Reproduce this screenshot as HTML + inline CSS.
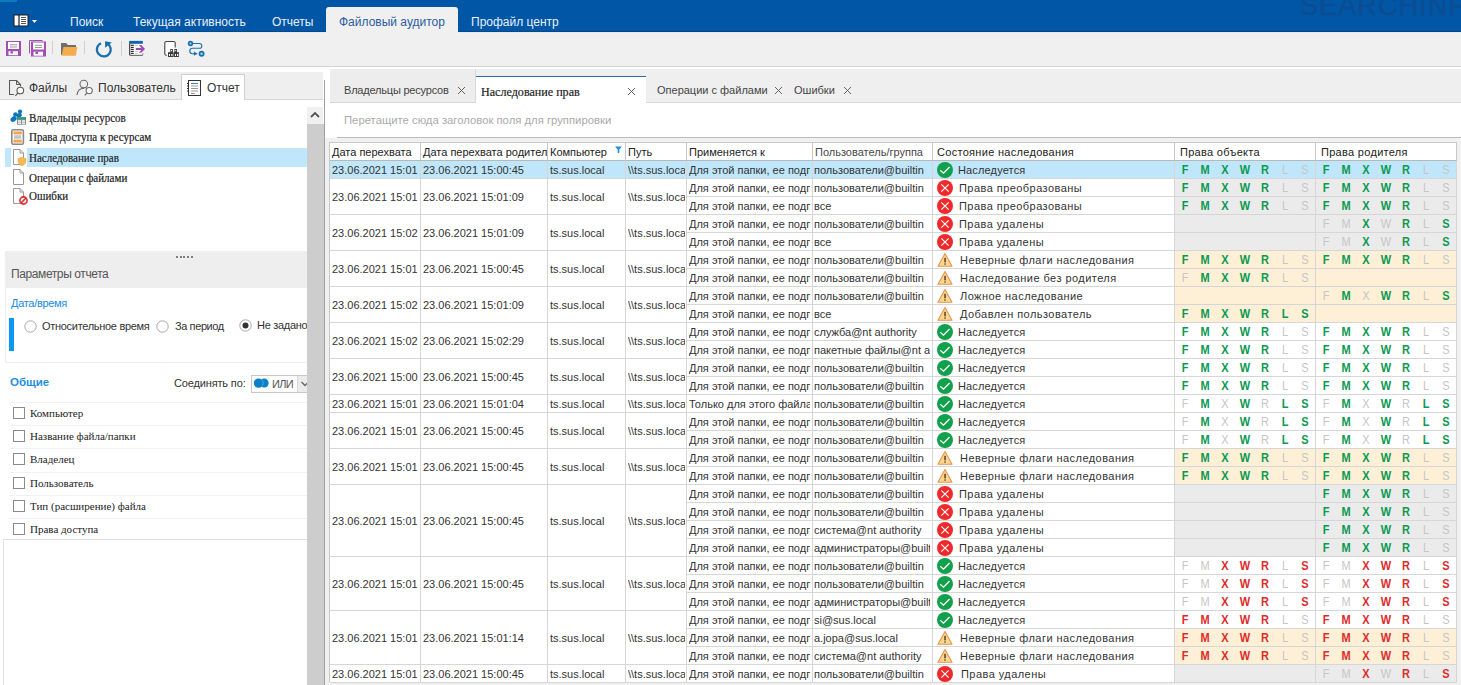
<!DOCTYPE html><html><head><meta charset="utf-8"><title>FileAuditor</title><style>
*{box-sizing:border-box}
html,body{margin:0;padding:0}
body{width:1461px;height:685px;overflow:hidden;background:#f0f0f0;font-family:"Liberation Sans",sans-serif;position:relative;color:#222}
.a{position:absolute;white-space:nowrap}
.tt{font-size:12px;color:#e8f1fb;top:15px;line-height:14px}
.srf{font-family:"Liberation Serif",serif;-webkit-text-stroke:0.2px #222}
.c{position:absolute;overflow:hidden;white-space:nowrap;border-right:1px solid #d6d6d6;border-bottom:1px solid #d6d6d6;font-size:11px;line-height:17px;padding-left:2px;padding-top:1px;color:#333}
.r{position:absolute;top:1px;width:20px;text-align:center;font-size:12.5px;line-height:17px;font-weight:bold;transform:scaleX(0.88)}
.g{color:#0a9a52}.d{color:#dd2c2c}.n{color:#c6c6c6;font-weight:normal}
.hd{position:absolute;overflow:hidden;white-space:nowrap;border-right:1px solid #c8c8c8;border-bottom:1px solid #b8b8b8;font-size:11px;line-height:17px;padding-left:3px;color:#222;background:#fff}
</style></head><body>
<div class="a" style="left:0;top:0;width:1461px;height:32px;background:#0156a6"></div>
<div class="a" style="left:0;top:0;width:17px;height:2px;background:#0a7cc0"></div>
<div class="a" style="left:0;top:31px;width:1461px;height:1px;background:#02498c"></div>
<div class="a" style="left:0;top:32px;width:1461px;height:1px;background:#e2ebf3"></div>
<div class="a" style="left:1300px;top:-9px;font-size:27px;letter-spacing:1.1px;color:#0a4d92;-webkit-text-stroke:0.5px #0a4d92;line-height:30px">SEARCHINFORM</div>
<svg class="a" style="left:13px;top:14px" width="26" height="13" viewBox="0 0 26 13"><rect x="1" y="1" width="14" height="11" fill="#fff" stroke="#1a1a1a" stroke-width="1"/><line x1="6" y1="1" x2="6" y2="12" stroke="#1a1a1a" stroke-width="1.2"/><line x1="8" y1="3.5" x2="13" y2="3.5" stroke="#555" stroke-width="1"/><line x1="8" y1="5.5" x2="13" y2="5.5" stroke="#555" stroke-width="1"/><line x1="8" y1="7.5" x2="13" y2="7.5" stroke="#555" stroke-width="1"/><line x1="8" y1="9.5" x2="13" y2="9.5" stroke="#555" stroke-width="1"/><path d="M19 6 L24 6 L21.5 9 Z" fill="#fff"/></svg>
<div class="a tt" style="left:70px">Поиск</div>
<div class="a tt" style="left:133px">Текущая активность</div>
<div class="a tt" style="left:272px">Отчеты</div>
<div class="a" style="left:326px;top:7px;width:132px;height:26px;background:#f0f0f0;border-radius:3px 3px 0 0"></div>
<div class="a tt" style="left:339px;color:#2b5d9e">Файловый аудитор</div>
<div class="a tt" style="left:471px">Профайл центр</div>
<svg class="a" style="left:6px;top:41px" width="18" height="18" viewBox="0 0 18 18"><rect x="0" y="0" width="15" height="15" fill="#a24fb3"/><rect x="2" y="1" width="11" height="7" fill="#fff"/><rect x="4" y="3.3" width="7" height="1" fill="#999"/><rect x="4" y="5.5" width="7" height="1" fill="#999"/><rect x="2.5" y="10.2" width="9.5" height="4" fill="#fff"/><rect x="4.5" y="10.2" width="2.5" height="2.3" fill="#a24fb3"/></svg>
<svg class="a" style="left:29px;top:40px" width="18" height="18" viewBox="0 0 18 18"><path d="M0.5 13.5 V0.5 H13.5" fill="none" stroke="#a24fb3" stroke-width="1"/><rect x="2" y="1.5" width="15" height="15" fill="#a24fb3"/><rect x="4" y="2.5" width="11" height="7" fill="#fff"/><rect x="6" y="4.8" width="7" height="1" fill="#999"/><rect x="6" y="7" width="7" height="1" fill="#999"/><rect x="4.5" y="11.7" width="9.5" height="4" fill="#fff"/><rect x="6.5" y="11.7" width="2.5" height="2.3" fill="#a24fb3"/></svg>
<div class="a" style="left:52px;top:41px;width:1px;height:13px;background:#d0d0d0"></div>
<svg class="a" style="left:61px;top:42px" width="17" height="14" viewBox="0 0 17 14"><path d="M0 1 H5 L7 3 H15 V13 H0 Z" fill="#6e6e6e"/><path d="M2.5 5 H16.5 L14.5 13.8 H0.5 Z" fill="#f4ad4d"/></svg>
<div class="a" style="left:84px;top:41px;width:1px;height:13px;background:#d0d0d0"></div>
<svg class="a" style="left:94px;top:40px" width="19" height="19" viewBox="0 0 19 19"><path d="M7 3.2 A6.9 6.9 0 1 0 11.4 2.8" fill="none" stroke="#1b6fae" stroke-width="2.2"/><path d="M11.1 1.2 L17.8 2.4 L11.1 7.7 Z" fill="#1b6fae"/></svg>
<div class="a" style="left:121px;top:41px;width:1px;height:15px;background:#d0d0d0"></div>
<svg class="a" style="left:129px;top:40px" width="17" height="17" viewBox="0 0 17 17"><path d="M0.7 3.5 V14.3 Q0.7 15.2 1.6 15.2 H12.8 Q13.6 15.2 13.6 14.3 V13" fill="#fff" stroke="#454545" stroke-width="1.2"/><rect x="0.7" y="3.5" width="12.9" height="11.2" fill="#fff"/><rect x="0.1" y="0.9" width="13.7" height="2.9" fill="#0b68a8"/><rect x="0.1" y="3.5" width="1.2" height="11.5" fill="#454545"/><rect x="1.9" y="4.7" width="2.9" height="1.2" fill="#333"/><rect x="1.9" y="6.8" width="2.9" height="1.2" fill="#333"/><rect x="1.9" y="8.8" width="2.9" height="1.2" fill="#333"/><rect x="1.9" y="10.8" width="2.9" height="1.2" fill="#333"/><rect x="1.9" y="12.8" width="2.9" height="1.2" fill="#333"/><rect x="5.9" y="4.8" width="3" height="0.9" fill="#bbb"/><rect x="5.9" y="10.9" width="3" height="0.9" fill="#bbb"/><rect x="5.9" y="12.9" width="3" height="0.9" fill="#bbb"/><rect x="6.8" y="7.9" width="6.5" height="2.1" fill="#9b4bb0"/><path d="M9.8 5 H12.3 L16 8.95 L12.3 12.8 H9.8 L13.4 8.95 Z" fill="#9b4bb0"/></svg>
<svg class="a" style="left:164px;top:40px" width="16" height="18" viewBox="0 0 16 18"><path d="M2.8 15.2 H2.3 A1.5 1.5 0 0 1 0.8 13.7 V3 A1.5 1.5 0 0 1 2.3 1.5 H9.7 A1.5 1.5 0 0 1 11.2 3 V7.6" fill="#fff" stroke="#444" stroke-width="1.1"/><rect x="6.3" y="9" width="2.5" height="4" fill="#3a3a3a"/><rect x="10.4" y="9" width="2.6" height="4" fill="#3a3a3a"/><rect x="4" y="12.2" width="5.6" height="4.8" fill="#3a3a3a"/><rect x="9.9" y="12.2" width="5" height="4.8" fill="#3a3a3a"/><rect x="7" y="10" width="1" height="1.2" fill="#fff"/><rect x="11.2" y="10" width="1" height="1.2" fill="#fff"/><rect x="5" y="14" width="1" height="2" fill="#fff"/><rect x="7.3" y="14" width="1.2" height="2" fill="#fff"/><rect x="11" y="14" width="1" height="2" fill="#fff"/><rect x="13" y="14" width="1.2" height="2" fill="#fff"/></svg>
<svg class="a" style="left:187px;top:40px" width="19" height="18" viewBox="0 0 19 18"><path d="M5.5 3.5 H12.4 A2.4 2.4 0 0 1 12.4 8.3 H5.5 A2.7 2.7 0 0 0 5.5 13.7 H7" fill="none" stroke="#1b6fae" stroke-width="1.1"/><circle cx="3.5" cy="3.5" r="1.9" fill="#8fd6f5" stroke="#1b6fae" stroke-width="1.6"/><path d="M6.9 11.6 L10.6 13.7 L6.9 15.8 Z" fill="#1b6fae"/><circle cx="14.6" cy="13.7" r="2.1" fill="#8fd6f5" stroke="#1b6fae" stroke-width="1.7"/></svg>
<div class="a" style="left:0;top:66px;width:1461px;height:1px;background:#d2d2d2"></div>
<div class="a" style="left:0;top:67px;width:1461px;height:618px;background:#fff"></div>
<div class="a" style="left:0;top:72px;width:323px;height:28px;background:#efefef;border-bottom:1px solid #d6d6d6"></div>
<svg class="a" style="left:9px;top:80px" width="16" height="17" viewBox="0 0 16 17"><path d="M5 14.5 H0.5 V0.5 H7.5 L11.5 4.5 V6.5" fill="none" stroke="#5a5a5a" stroke-width="1.1"/><path d="M7.5 0.5 V4.5 H11.5" fill="none" stroke="#5a5a5a" stroke-width="1"/><circle cx="11.3" cy="10.6" r="3.3" fill="#fff" stroke="#5a5a5a" stroke-width="1.1"/><line x1="9" y1="13" x2="6.3" y2="15.8" stroke="#5a5a5a" stroke-width="1.1"/></svg>
<div class="a" style="left:29px;top:81px;font-size:12px;line-height:15px;color:#333">Файлы</div>
<svg class="a" style="left:76px;top:79px" width="18" height="17" viewBox="0 0 18 17"><circle cx="7.8" cy="5.1" r="3.8" fill="none" stroke="#6a6a6a" stroke-width="1.1"/><path d="M1 16 C1.5 11.5 4 9.3 8 9.3" fill="none" stroke="#6a6a6a" stroke-width="1.1"/><circle cx="13.2" cy="11.6" r="3.1" fill="#fff" stroke="#6a6a6a" stroke-width="1.1"/><line x1="11" y1="13.8" x2="8.8" y2="16.4" stroke="#6a6a6a" stroke-width="1.1"/></svg>
<div class="a" style="left:98px;top:81px;font-size:12px;line-height:15px;color:#333">Пользователь</div>
<div class="a" style="left:181px;top:74px;width:64px;height:26px;background:#fff;border:1px solid #cfcfcf;border-bottom:none"></div>
<svg class="a" style="left:187px;top:80px" width="15" height="16" viewBox="0 0 15 16"><rect x="1.5" y="0.5" width="12" height="15" fill="#fff" stroke="#333" stroke-width="1"/><rect x="4" y="3" width="7" height="1" fill="#1a8fd0"/><rect x="4" y="5.5" width="7" height="1" fill="#999"/><rect x="4" y="8" width="7" height="1" fill="#999"/><rect x="4" y="10.5" width="7" height="1" fill="#999"/><rect x="4" y="13" width="4" height="1" fill="#999"/><rect x="0" y="3" width="2" height="1" fill="#333"/><rect x="0" y="5.5" width="2" height="1" fill="#333"/><rect x="0" y="8" width="2" height="1" fill="#333"/><rect x="0" y="10.5" width="2" height="1" fill="#333"/></svg>
<div class="a" style="left:207px;top:81px;font-size:12px;line-height:15px;color:#333">Отчет</div>
<div class="a" style="left:307px;top:107px;width:16px;height:17px;background:#f0f0f0"></div>
<svg class="a" style="left:310px;top:111px" width="10" height="8" viewBox="0 0 10 8"><path d="M1 6 L5 2 L9 6" fill="none" stroke="#555" stroke-width="1.8"/></svg>
<div class="a" style="left:307px;top:124px;width:17px;height:561px;background:#cdcdcd;z-index:5"></div>
<div class="a" style="left:324px;top:80px;width:1px;height:605px;background:#a0a0a0;z-index:6"></div>
<div class="a" style="left:5px;top:148px;width:302px;height:19px;background:#bfe6fa"></div>
<div class="a" style="left:11px;top:148px;width:16px;height:19px;background:#fff"></div>
<div class="a srf" style="left:29px;top:112px;font-size:12px;line-height:13px;color:#222;transform:scaleX(0.917);transform-origin:0 0">Владельцы ресурсов</div>
<div class="a srf" style="left:29px;top:131px;font-size:12px;line-height:13px;color:#222;transform:scaleX(0.917);transform-origin:0 0">Права доступа к ресурсам</div>
<div class="a srf" style="left:29px;top:152px;font-size:12px;line-height:13px;color:#222;transform:scaleX(0.917);transform-origin:0 0">Наследование прав</div>
<div class="a srf" style="left:29px;top:172px;font-size:12px;line-height:13px;color:#222;transform:scaleX(0.917);transform-origin:0 0">Операции с файлами</div>
<div class="a srf" style="left:29px;top:190px;font-size:12px;line-height:13px;color:#222;transform:scaleX(0.917);transform-origin:0 0">Ошибки</div>
<svg class="a" style="left:10px;top:109px" width="17" height="16" viewBox="0 0 17 16"><circle cx="10" cy="2.6" r="2.1" fill="#0f73bd"/><ellipse cx="9.2" cy="6.3" rx="2.8" ry="2.3" transform="rotate(-35 9.2 6.3)" fill="#0f73bd"/><circle cx="5.4" cy="5.4" r="2.2" fill="#0f73bd"/><ellipse cx="3.6" cy="10" rx="3.3" ry="2.5" transform="rotate(-35 3.6 10)" fill="#0f73bd"/><rect x="7" y="8.2" width="9" height="7.5" fill="#8e8e8e"/><rect x="7" y="8.2" width="9" height="2.2" fill="#2a9d86"/><rect x="8" y="11.2" width="3" height="1.6" fill="#f4f4f4"/><rect x="12" y="11.2" width="3" height="1.6" fill="#f4f4f4"/><rect x="8" y="13.4" width="3" height="1.5" fill="#f4f4f4"/><rect x="12" y="13.4" width="3" height="1.5" fill="#f4f4f4"/></svg>
<svg class="a" style="left:11px;top:129px" width="14" height="16" viewBox="0 0 14 16"><rect x="0.8" y="0.8" width="11.6" height="14.4" rx="1.5" fill="#fff" stroke="#8a8a8a" stroke-width="1.6"/><rect x="2.4" y="2.4" width="8.4" height="3" fill="#f5a64c"/><rect x="2.4" y="10.6" width="8.4" height="3" fill="#f5a64c"/><rect x="3" y="6.6" width="7.2" height="0.9" fill="#7d8fa3"/><rect x="3" y="8.5" width="7.2" height="0.9" fill="#7d8fa3"/></svg>
<svg class="a" style="left:12px;top:149px" width="16" height="17" viewBox="0 0 16 17"><path d="M1.5 0.5 H8 L11.5 4 V15.5 H1.5 Z" fill="#fff" stroke="#999" stroke-width="1"/><path d="M8 0.5 V4 H11.5" fill="none" stroke="#999" stroke-width="1"/><path d="M6 9.6 L10 8.2 L14 9.6 V12.3 C14 14.6 12.2 16 10 16.9 C7.8 16 6 14.6 6 12.3 Z" fill="#f5b955" stroke="#e9a23a" stroke-width="0.5"/></svg>
<svg class="a" style="left:12px;top:169px" width="16" height="17" viewBox="0 0 16 17"><path d="M1.5 0.5 H8 L11.5 4 V15.5 H1.5 Z" fill="#fff" stroke="#999" stroke-width="1"/><path d="M8 0.5 V4 H11.5" fill="none" stroke="#999" stroke-width="1"/></svg>
<svg class="a" style="left:12px;top:188px" width="16" height="17" viewBox="0 0 16 17"><path d="M1.5 0.5 H8 L11.5 4 V15.5 H1.5 Z" fill="#fff" stroke="#999" stroke-width="1"/><path d="M8 0.5 V4 H11.5" fill="none" stroke="#999" stroke-width="1"/><circle cx="11.5" cy="12.5" r="3.6" fill="#fff" stroke="#e02a2a" stroke-width="1.6"/><line x1="9" y1="15" x2="14" y2="10" stroke="#e02a2a" stroke-width="1.6"/></svg>
<div class="a" style="left:5px;top:251px;width:302px;height:36px;background:#eeeeee"></div>
<div class="a" style="left:175.7px;top:256px;width:2px;height:2px;background:#5a5a5a;border-radius:1px"></div>
<div class="a" style="left:179.5px;top:256px;width:2px;height:2px;background:#5a5a5a;border-radius:1px"></div>
<div class="a" style="left:183.3px;top:256px;width:2px;height:2px;background:#5a5a5a;border-radius:1px"></div>
<div class="a" style="left:187.1px;top:256px;width:2px;height:2px;background:#5a5a5a;border-radius:1px"></div>
<div class="a" style="left:190.9px;top:256px;width:2px;height:2px;background:#5a5a5a;border-radius:1px"></div>
<div class="a" style="left:11px;top:267px;font-size:12px;line-height:14px;color:#555;letter-spacing:-0.4px">Параметры отчета</div>
<div class="a" style="left:5px;top:287px;width:302px;height:76px;border:1px solid #ededed;border-right:none"></div>
<div class="a" style="left:11px;top:297px;font-size:11px;line-height:13px;color:#1689e8;letter-spacing:-0.3px">Дата/время</div>
<div class="a" style="left:9px;top:318px;width:5px;height:33px;background:#0c97f2"></div>
<svg class="a" style="left:24px;top:320px" width="13" height="13" viewBox="0 0 13 13"><circle cx="6.5" cy="6.5" r="5.7" fill="#fff" stroke="#a8a8a8" stroke-width="1"/></svg>
<svg class="a" style="left:156px;top:320px" width="13" height="13" viewBox="0 0 13 13"><circle cx="6.5" cy="6.5" r="5.7" fill="#fff" stroke="#a8a8a8" stroke-width="1"/></svg>
<svg class="a" style="left:239px;top:319px" width="13" height="13" viewBox="0 0 13 13"><circle cx="6.5" cy="6.5" r="5.7" fill="#fff" stroke="#a8a8a8" stroke-width="1"/><circle cx="6.5" cy="6.5" r="3" fill="#333"/></svg>
<div class="a" style="left:42px;top:320px;font-size:11px;line-height:13px;color:#333;letter-spacing:-0.3px">Относительное время</div>
<div class="a" style="left:175px;top:320px;font-size:11px;line-height:13px;color:#333;letter-spacing:-0.4px">За период</div>
<div class="a" style="left:257px;top:319px;width:50px;overflow:hidden;font-size:11px;line-height:13px;color:#333;letter-spacing:-0.3px">Не задано</div>
<div class="a" style="left:10px;top:376px;font-size:11.5px;line-height:13px;color:#1f8fe0;font-weight:bold">Общие</div>
<div class="a" style="left:174px;top:377px;font-size:11px;line-height:13px;color:#333;letter-spacing:-0.15px">Соединять по:</div>
<div class="a" style="left:251px;top:375px;width:60px;height:18px;background:#fff;border:1px solid #c8c8c8"></div>
<div class="a" style="left:297px;top:376px;width:14px;height:16px;background:#ebebeb;border-left:1px solid #d8d8d8"></div>
<svg class="a" style="left:253px;top:378px" width="16" height="11" viewBox="0 0 16 11"><circle cx="5.5" cy="5.1" r="4.7" fill="#0a80c8"/><circle cx="11.2" cy="5.1" r="4.5" fill="#0a80c8"/><path d="M8.4 1.4 A4.7 4.7 0 0 1 8.4 8.8" fill="none" stroke="#58c0ee" stroke-width="0.7"/></svg>
<div class="a" style="left:272px;top:378px;font-size:11px;line-height:13px;color:#555;letter-spacing:-0.7px">ИЛИ</div>
<svg class="a" style="left:301px;top:381px" width="8" height="6" viewBox="0 0 8 6"><path d="M0.5 1 L4 4.5 L7.5 1" fill="none" stroke="#666" stroke-width="1.3"/></svg>
<div class="a" style="left:9px;top:402px;width:298px;height:1px;background:#f2f2f2"></div>
<div class="a" style="left:13px;top:407.0px;width:12px;height:12px;border:1px solid #8a8a8a;background:#fff"></div>
<div class="a" style="font-family:'Liberation Serif',serif;left:30px;top:407.0px;font-size:11px;line-height:13px;color:#222">Компьютер</div>
<div class="a" style="left:9px;top:425px;width:298px;height:1px;background:#f2f2f2"></div>
<div class="a" style="left:13px;top:430.0px;width:12px;height:12px;border:1px solid #8a8a8a;background:#fff"></div>
<div class="a" style="font-family:'Liberation Serif',serif;left:30px;top:430.0px;font-size:11px;line-height:13px;color:#222">Название файла/папки</div>
<div class="a" style="left:9px;top:448px;width:298px;height:1px;background:#f2f2f2"></div>
<div class="a" style="left:13px;top:453.0px;width:12px;height:12px;border:1px solid #8a8a8a;background:#fff"></div>
<div class="a" style="font-family:'Liberation Serif',serif;left:30px;top:453.0px;font-size:11px;line-height:13px;color:#222">Владелец</div>
<div class="a" style="left:9px;top:472px;width:298px;height:1px;background:#f2f2f2"></div>
<div class="a" style="left:13px;top:477.0px;width:12px;height:12px;border:1px solid #8a8a8a;background:#fff"></div>
<div class="a" style="font-family:'Liberation Serif',serif;left:30px;top:477.0px;font-size:11px;line-height:13px;color:#222">Пользователь</div>
<div class="a" style="left:9px;top:495px;width:298px;height:1px;background:#f2f2f2"></div>
<div class="a" style="left:13px;top:500.0px;width:12px;height:12px;border:1px solid #8a8a8a;background:#fff"></div>
<div class="a" style="font-family:'Liberation Serif',serif;left:30px;top:500.0px;font-size:11px;line-height:13px;color:#222">Тип (расширение) файла</div>
<div class="a" style="left:9px;top:518px;width:298px;height:1px;background:#f2f2f2"></div>
<div class="a" style="left:13px;top:523.0px;width:12px;height:12px;border:1px solid #8a8a8a;background:#fff"></div>
<div class="a" style="font-family:'Liberation Serif',serif;left:30px;top:523.0px;font-size:11px;line-height:13px;color:#222">Права доступа</div>
<div class="a" style="left:3px;top:539px;width:304px;height:146px;border:1px solid #e0e0e0;border-right:none;border-bottom:none"></div>
<div class="a" style="left:330px;top:69px;width:1131px;height:34px;background:#efefef;border-bottom:1px solid #d9d9d9"></div>
<div class="a" style="left:330px;top:69px;width:146px;height:34px;background:#ededed;border-right:1px solid #d9d9d9;border-bottom:1px solid #d6d6d6"></div>
<div class="a" style="left:344px;top:84px;font-size:11px;line-height:13px;color:#444;letter-spacing:-0.2px">Владельцы ресурсов</div>
<svg class="a" style="left:457px;top:86px" width="9" height="9" viewBox="0 0 9 9"><path d="M1 1 L8 8 M8 1 L1 8" stroke="#555" stroke-width="0.9"/></svg>
<div class="a" style="left:476px;top:76px;width:170px;height:28px;background:#fff;border-top:1px solid #2a6cb2"></div>
<div class="a srf" style="left:481px;top:85px;font-size:13px;line-height:14px;color:#222;transform:scaleX(0.93);transform-origin:0 0">Наследование прав</div>
<svg class="a" style="left:627px;top:87px" width="9" height="9" viewBox="0 0 9 9"><path d="M1 1 L8 8 M8 1 L1 8" stroke="#555" stroke-width="0.9"/></svg>
<div class="a" style="left:657px;top:84px;font-size:11px;line-height:13px;color:#444">Операции с файлами</div>
<svg class="a" style="left:774px;top:86px" width="9" height="9" viewBox="0 0 9 9"><path d="M1 1 L8 8 M8 1 L1 8" stroke="#555" stroke-width="0.9"/></svg>
<div class="a" style="left:794px;top:84px;font-size:11px;line-height:13px;color:#444">Ошибки</div>
<svg class="a" style="left:843px;top:86px" width="9" height="9" viewBox="0 0 9 9"><path d="M1 1 L8 8 M8 1 L1 8" stroke="#555" stroke-width="0.9"/></svg>
<div class="a" style="left:344px;top:114px;font-size:11.3px;line-height:13px;color:#aaa">Перетащите сюда заголовок поля для группировки</div>
<div class="a" style="left:337px;top:137px;width:1124px;height:1px;background:#bcbcbc"></div>
<div class="a" style="left:325px;top:138px;width:1136px;height:547px;background:#f0f0f0"></div>
<div class="a" style="left:329px;top:142px;width:1px;height:540px;background:#c8c8c8"></div>
<div class="a" style="left:329px;top:142px;width:1128px;height:1px;background:#c8c8c8"></div>
<div class="hd" style="left:330px;top:143px;width:91px;height:18px;color:#222;padding-left:2px;padding-top:1px;letter-spacing:normal">Дата перехвата</div>
<div class="hd" style="left:421px;top:143px;width:127px;height:18px;color:#222;padding-left:2px;padding-top:1px;letter-spacing:normal">Дата перехвата родител</div>
<div class="hd" style="left:548px;top:143px;width:78px;height:18px;color:#222;padding-left:2px;padding-top:1px;letter-spacing:normal">Компьютер</div>
<div class="hd" style="left:626px;top:143px;width:61px;height:18px;color:#222;padding-left:2px;padding-top:1px;letter-spacing:normal">Путь</div>
<div class="hd" style="left:687px;top:143px;width:126px;height:18px;color:#222;padding-left:2px;padding-top:1px;letter-spacing:normal">Применяется к</div>
<div class="hd" style="left:813px;top:143px;width:120px;height:18px;color:#484848;padding-left:2px;padding-top:1px;letter-spacing:normal">Пользователь/группа</div>
<div class="hd" style="left:933px;top:143px;width:242px;height:18px;color:#222;padding-left:4px;padding-top:1px;letter-spacing:0.3px">Состояние наследования</div>
<div class="hd" style="left:1175px;top:143px;width:141px;height:18px;color:#222;padding-left:5px;padding-top:1px;letter-spacing:0.3px">Права объекта</div>
<div class="hd" style="left:1316px;top:143px;width:141px;height:18px;color:#222;padding-left:5px;padding-top:1px;letter-spacing:0.3px">Права родителя</div>
<svg class="a" style="left:615px;top:146px" width="8" height="8" viewBox="0 0 8 8"><path d="M0 0.5 H7 L4.3 3.5 V7 H2.7 V3.5 Z" fill="#1f8fe0"/></svg>
<div class="c" style="left:330px;top:161px;width:91px;height:18px;background:#bfe6fa;padding-top:1px"><div style="overflow:hidden;width:87px">23.06.2021 15:01</div></div>
<div class="c" style="left:421px;top:161px;width:127px;height:18px;background:#bfe6fa;padding-top:1px"><div style="overflow:hidden;width:123px">23.06.2021 15:00:45</div></div>
<div class="c" style="left:548px;top:161px;width:78px;height:18px;background:#bfe6fa;padding-top:1px"><div style="overflow:hidden;width:74px">ts.sus.local</div></div>
<div class="c" style="left:626px;top:161px;width:61px;height:18px;background:#bfe6fa;padding-top:1px"><div style="overflow:hidden;width:57px">\\ts.sus.local\share</div></div>
<div class="c" style="left:330px;top:179px;width:91px;height:36px;background:#fff;padding-top:10px"><div style="overflow:hidden;width:87px">23.06.2021 15:01</div></div>
<div class="c" style="left:421px;top:179px;width:127px;height:36px;background:#fff;padding-top:10px"><div style="overflow:hidden;width:123px">23.06.2021 15:01:09</div></div>
<div class="c" style="left:548px;top:179px;width:78px;height:36px;background:#fff;padding-top:10px"><div style="overflow:hidden;width:74px">ts.sus.local</div></div>
<div class="c" style="left:626px;top:179px;width:61px;height:36px;background:#fff;padding-top:10px"><div style="overflow:hidden;width:57px">\\ts.sus.local\share</div></div>
<div class="c" style="left:330px;top:215px;width:91px;height:36px;background:#fff;padding-top:10px"><div style="overflow:hidden;width:87px">23.06.2021 15:02</div></div>
<div class="c" style="left:421px;top:215px;width:127px;height:36px;background:#fff;padding-top:10px"><div style="overflow:hidden;width:123px">23.06.2021 15:01:09</div></div>
<div class="c" style="left:548px;top:215px;width:78px;height:36px;background:#fff;padding-top:10px"><div style="overflow:hidden;width:74px">ts.sus.local</div></div>
<div class="c" style="left:626px;top:215px;width:61px;height:36px;background:#fff;padding-top:10px"><div style="overflow:hidden;width:57px">\\ts.sus.local\share</div></div>
<div class="c" style="left:330px;top:251px;width:91px;height:36px;background:#fff;padding-top:10px"><div style="overflow:hidden;width:87px">23.06.2021 15:01</div></div>
<div class="c" style="left:421px;top:251px;width:127px;height:36px;background:#fff;padding-top:10px"><div style="overflow:hidden;width:123px">23.06.2021 15:00:45</div></div>
<div class="c" style="left:548px;top:251px;width:78px;height:36px;background:#fff;padding-top:10px"><div style="overflow:hidden;width:74px">ts.sus.local</div></div>
<div class="c" style="left:626px;top:251px;width:61px;height:36px;background:#fff;padding-top:10px"><div style="overflow:hidden;width:57px">\\ts.sus.local\share</div></div>
<div class="c" style="left:330px;top:287px;width:91px;height:36px;background:#fff;padding-top:10px"><div style="overflow:hidden;width:87px">23.06.2021 15:02</div></div>
<div class="c" style="left:421px;top:287px;width:127px;height:36px;background:#fff;padding-top:10px"><div style="overflow:hidden;width:123px">23.06.2021 15:01:09</div></div>
<div class="c" style="left:548px;top:287px;width:78px;height:36px;background:#fff;padding-top:10px"><div style="overflow:hidden;width:74px">ts.sus.local</div></div>
<div class="c" style="left:626px;top:287px;width:61px;height:36px;background:#fff;padding-top:10px"><div style="overflow:hidden;width:57px">\\ts.sus.local\share</div></div>
<div class="c" style="left:330px;top:323px;width:91px;height:36px;background:#fff;padding-top:10px"><div style="overflow:hidden;width:87px">23.06.2021 15:02</div></div>
<div class="c" style="left:421px;top:323px;width:127px;height:36px;background:#fff;padding-top:10px"><div style="overflow:hidden;width:123px">23.06.2021 15:02:29</div></div>
<div class="c" style="left:548px;top:323px;width:78px;height:36px;background:#fff;padding-top:10px"><div style="overflow:hidden;width:74px">ts.sus.local</div></div>
<div class="c" style="left:626px;top:323px;width:61px;height:36px;background:#fff;padding-top:10px"><div style="overflow:hidden;width:57px">\\ts.sus.local\share</div></div>
<div class="c" style="left:330px;top:359px;width:91px;height:36px;background:#fff;padding-top:10px"><div style="overflow:hidden;width:87px">23.06.2021 15:00</div></div>
<div class="c" style="left:421px;top:359px;width:127px;height:36px;background:#fff;padding-top:10px"><div style="overflow:hidden;width:123px">23.06.2021 15:00:45</div></div>
<div class="c" style="left:548px;top:359px;width:78px;height:36px;background:#fff;padding-top:10px"><div style="overflow:hidden;width:74px">ts.sus.local</div></div>
<div class="c" style="left:626px;top:359px;width:61px;height:36px;background:#fff;padding-top:10px"><div style="overflow:hidden;width:57px">\\ts.sus.local\share</div></div>
<div class="c" style="left:330px;top:395px;width:91px;height:18px;background:#fff;padding-top:1px"><div style="overflow:hidden;width:87px">23.06.2021 15:01</div></div>
<div class="c" style="left:421px;top:395px;width:127px;height:18px;background:#fff;padding-top:1px"><div style="overflow:hidden;width:123px">23.06.2021 15:01:04</div></div>
<div class="c" style="left:548px;top:395px;width:78px;height:18px;background:#fff;padding-top:1px"><div style="overflow:hidden;width:74px">ts.sus.local</div></div>
<div class="c" style="left:626px;top:395px;width:61px;height:18px;background:#fff;padding-top:1px"><div style="overflow:hidden;width:57px">\\ts.sus.local\share</div></div>
<div class="c" style="left:330px;top:413px;width:91px;height:36px;background:#fff;padding-top:10px"><div style="overflow:hidden;width:87px">23.06.2021 15:01</div></div>
<div class="c" style="left:421px;top:413px;width:127px;height:36px;background:#fff;padding-top:10px"><div style="overflow:hidden;width:123px">23.06.2021 15:00:45</div></div>
<div class="c" style="left:548px;top:413px;width:78px;height:36px;background:#fff;padding-top:10px"><div style="overflow:hidden;width:74px">ts.sus.local</div></div>
<div class="c" style="left:626px;top:413px;width:61px;height:36px;background:#fff;padding-top:10px"><div style="overflow:hidden;width:57px">\\ts.sus.local\share</div></div>
<div class="c" style="left:330px;top:449px;width:91px;height:36px;background:#fff;padding-top:10px"><div style="overflow:hidden;width:87px">23.06.2021 15:01</div></div>
<div class="c" style="left:421px;top:449px;width:127px;height:36px;background:#fff;padding-top:10px"><div style="overflow:hidden;width:123px">23.06.2021 15:00:45</div></div>
<div class="c" style="left:548px;top:449px;width:78px;height:36px;background:#fff;padding-top:10px"><div style="overflow:hidden;width:74px">ts.sus.local</div></div>
<div class="c" style="left:626px;top:449px;width:61px;height:36px;background:#fff;padding-top:10px"><div style="overflow:hidden;width:57px">\\ts.sus.local\share</div></div>
<div class="c" style="left:330px;top:485px;width:91px;height:72px;background:#fff;padding-top:28px"><div style="overflow:hidden;width:87px">23.06.2021 15:01</div></div>
<div class="c" style="left:421px;top:485px;width:127px;height:72px;background:#fff;padding-top:28px"><div style="overflow:hidden;width:123px">23.06.2021 15:00:45</div></div>
<div class="c" style="left:548px;top:485px;width:78px;height:72px;background:#fff;padding-top:28px"><div style="overflow:hidden;width:74px">ts.sus.local</div></div>
<div class="c" style="left:626px;top:485px;width:61px;height:72px;background:#fff;padding-top:28px"><div style="overflow:hidden;width:57px">\\ts.sus.local\share</div></div>
<div class="c" style="left:330px;top:557px;width:91px;height:54px;background:#fff;padding-top:19px"><div style="overflow:hidden;width:87px">23.06.2021 15:01</div></div>
<div class="c" style="left:421px;top:557px;width:127px;height:54px;background:#fff;padding-top:19px"><div style="overflow:hidden;width:123px">23.06.2021 15:00:45</div></div>
<div class="c" style="left:548px;top:557px;width:78px;height:54px;background:#fff;padding-top:19px"><div style="overflow:hidden;width:74px">ts.sus.local</div></div>
<div class="c" style="left:626px;top:557px;width:61px;height:54px;background:#fff;padding-top:19px"><div style="overflow:hidden;width:57px">\\ts.sus.local\share</div></div>
<div class="c" style="left:330px;top:611px;width:91px;height:54px;background:#fff;padding-top:19px"><div style="overflow:hidden;width:87px">23.06.2021 15:01</div></div>
<div class="c" style="left:421px;top:611px;width:127px;height:54px;background:#fff;padding-top:19px"><div style="overflow:hidden;width:123px">23.06.2021 15:01:14</div></div>
<div class="c" style="left:548px;top:611px;width:78px;height:54px;background:#fff;padding-top:19px"><div style="overflow:hidden;width:74px">ts.sus.local</div></div>
<div class="c" style="left:626px;top:611px;width:61px;height:54px;background:#fff;padding-top:19px"><div style="overflow:hidden;width:57px">\\ts.sus.local\share</div></div>
<div class="c" style="left:330px;top:665px;width:91px;height:18px;background:#fff;padding-top:1px"><div style="overflow:hidden;width:87px">23.06.2021 15:01</div></div>
<div class="c" style="left:421px;top:665px;width:127px;height:18px;background:#fff;padding-top:1px"><div style="overflow:hidden;width:123px">23.06.2021 15:00:45</div></div>
<div class="c" style="left:548px;top:665px;width:78px;height:18px;background:#fff;padding-top:1px"><div style="overflow:hidden;width:74px">ts.sus.local</div></div>
<div class="c" style="left:626px;top:665px;width:61px;height:18px;background:#fff;padding-top:1px"><div style="overflow:hidden;width:57px">\\ts.sus.local\share</div></div>
<div class="c" style="left:687px;top:161px;width:126px;height:18px;background:#bfe6fa;padding-left:2px"><div style="overflow:hidden;width:121px">Для этой папки, ее подпапок и файлов</div></div>
<div class="c" style="left:813px;top:161px;width:120px;height:18px;background:#bfe6fa;padding-left:1px"><div style="overflow:hidden;width:116px">пользователи@builtin</div></div>
<div class="c" style="left:933px;top:161px;width:242px;height:18px;background:#bfe6fa;padding-left:25px;letter-spacing:0.15px">Наследуется</div>
<svg class="a" style="left:937px;top:162px" width="16" height="16" viewBox="0 0 16 16"><circle cx="8" cy="8" r="8" fill="#12a04c"/><path d="M3.2 8.2 L6.5 11.2 L12.6 5" fill="none" stroke="#fff" stroke-width="1.3"/></svg>
<div class="c" style="left:1175px;top:161px;width:141px;height:18px;background:#bfe6fa;padding:0"><span class="r g" style="left:0px">F</span><span class="r g" style="left:20px">M</span><span class="r g" style="left:40px">X</span><span class="r g" style="left:60px">W</span><span class="r g" style="left:80px">R</span><span class="r n" style="left:100px">L</span><span class="r n" style="left:120px">S</span></div>
<div class="c" style="left:1316px;top:161px;width:141px;height:18px;background:#bfe6fa;padding:0"><span class="r g" style="left:0px">F</span><span class="r g" style="left:20px">M</span><span class="r g" style="left:40px">X</span><span class="r g" style="left:60px">W</span><span class="r g" style="left:80px">R</span><span class="r n" style="left:100px">L</span><span class="r n" style="left:120px">S</span></div>
<div class="c" style="left:687px;top:179px;width:126px;height:18px;background:#fff;padding-left:2px"><div style="overflow:hidden;width:121px">Для этой папки, ее подпапок и файлов</div></div>
<div class="c" style="left:813px;top:179px;width:120px;height:18px;background:#fff;padding-left:1px"><div style="overflow:hidden;width:116px">пользователи@builtin</div></div>
<div class="c" style="left:933px;top:179px;width:242px;height:18px;background:#fff;padding-left:26px;letter-spacing:0.45px">Права преобразованы</div>
<svg class="a" style="left:937px;top:180px" width="16" height="16" viewBox="0 0 16 16"><circle cx="8" cy="8" r="8" fill="#ee2a2c"/><path d="M4.3 4.3 L11.7 11.7 M11.7 4.3 L4.3 11.7" fill="none" stroke="#fff" stroke-width="1.15"/></svg>
<div class="c" style="left:1175px;top:179px;width:141px;height:18px;background:#ebebeb;padding:0"><span class="r g" style="left:0px">F</span><span class="r g" style="left:20px">M</span><span class="r g" style="left:40px">X</span><span class="r g" style="left:60px">W</span><span class="r g" style="left:80px">R</span><span class="r n" style="left:100px">L</span><span class="r n" style="left:120px">S</span></div>
<div class="c" style="left:1316px;top:179px;width:141px;height:18px;background:#ebebeb;padding:0"><span class="r g" style="left:0px">F</span><span class="r g" style="left:20px">M</span><span class="r g" style="left:40px">X</span><span class="r g" style="left:60px">W</span><span class="r g" style="left:80px">R</span><span class="r n" style="left:100px">L</span><span class="r n" style="left:120px">S</span></div>
<div class="c" style="left:687px;top:197px;width:126px;height:18px;background:#fff;padding-left:2px"><div style="overflow:hidden;width:121px">Для этой папки, ее подпапок и файлов</div></div>
<div class="c" style="left:813px;top:197px;width:120px;height:18px;background:#fff;padding-left:1px"><div style="overflow:hidden;width:116px">все</div></div>
<div class="c" style="left:933px;top:197px;width:242px;height:18px;background:#fff;padding-left:26px;letter-spacing:0.45px">Права преобразованы</div>
<svg class="a" style="left:937px;top:198px" width="16" height="16" viewBox="0 0 16 16"><circle cx="8" cy="8" r="8" fill="#ee2a2c"/><path d="M4.3 4.3 L11.7 11.7 M11.7 4.3 L4.3 11.7" fill="none" stroke="#fff" stroke-width="1.15"/></svg>
<div class="c" style="left:1175px;top:197px;width:141px;height:18px;background:#ebebeb;padding:0"><span class="r g" style="left:0px">F</span><span class="r g" style="left:20px">M</span><span class="r g" style="left:40px">X</span><span class="r g" style="left:60px">W</span><span class="r g" style="left:80px">R</span><span class="r n" style="left:100px">L</span><span class="r n" style="left:120px">S</span></div>
<div class="c" style="left:1316px;top:197px;width:141px;height:18px;background:#ebebeb;padding:0"><span class="r g" style="left:0px">F</span><span class="r g" style="left:20px">M</span><span class="r g" style="left:40px">X</span><span class="r g" style="left:60px">W</span><span class="r g" style="left:80px">R</span><span class="r n" style="left:100px">L</span><span class="r n" style="left:120px">S</span></div>
<div class="c" style="left:687px;top:215px;width:126px;height:18px;background:#fff;padding-left:2px"><div style="overflow:hidden;width:121px">Для этой папки, ее подпапок и файлов</div></div>
<div class="c" style="left:813px;top:215px;width:120px;height:18px;background:#fff;padding-left:1px"><div style="overflow:hidden;width:116px">пользователи@builtin</div></div>
<div class="c" style="left:933px;top:215px;width:242px;height:18px;background:#fff;padding-left:26px;letter-spacing:0.45px">Права удалены</div>
<svg class="a" style="left:937px;top:216px" width="16" height="16" viewBox="0 0 16 16"><circle cx="8" cy="8" r="8" fill="#ee2a2c"/><path d="M4.3 4.3 L11.7 11.7 M11.7 4.3 L4.3 11.7" fill="none" stroke="#fff" stroke-width="1.15"/></svg>
<div class="c" style="left:1175px;top:215px;width:141px;height:18px;background:#ebebeb;padding:0"></div>
<div class="c" style="left:1316px;top:215px;width:141px;height:18px;background:#ebebeb;padding:0"><span class="r n" style="left:0px">F</span><span class="r n" style="left:20px">M</span><span class="r g" style="left:40px">X</span><span class="r n" style="left:60px">W</span><span class="r g" style="left:80px">R</span><span class="r n" style="left:100px">L</span><span class="r g" style="left:120px">S</span></div>
<div class="c" style="left:687px;top:233px;width:126px;height:18px;background:#fff;padding-left:2px"><div style="overflow:hidden;width:121px">Для этой папки, ее подпапок и файлов</div></div>
<div class="c" style="left:813px;top:233px;width:120px;height:18px;background:#fff;padding-left:1px"><div style="overflow:hidden;width:116px">все</div></div>
<div class="c" style="left:933px;top:233px;width:242px;height:18px;background:#fff;padding-left:26px;letter-spacing:0.45px">Права удалены</div>
<svg class="a" style="left:937px;top:234px" width="16" height="16" viewBox="0 0 16 16"><circle cx="8" cy="8" r="8" fill="#ee2a2c"/><path d="M4.3 4.3 L11.7 11.7 M11.7 4.3 L4.3 11.7" fill="none" stroke="#fff" stroke-width="1.15"/></svg>
<div class="c" style="left:1175px;top:233px;width:141px;height:18px;background:#ebebeb;padding:0"></div>
<div class="c" style="left:1316px;top:233px;width:141px;height:18px;background:#ebebeb;padding:0"><span class="r n" style="left:0px">F</span><span class="r n" style="left:20px">M</span><span class="r g" style="left:40px">X</span><span class="r n" style="left:60px">W</span><span class="r g" style="left:80px">R</span><span class="r n" style="left:100px">L</span><span class="r g" style="left:120px">S</span></div>
<div class="c" style="left:687px;top:251px;width:126px;height:18px;background:#fff;padding-left:2px"><div style="overflow:hidden;width:121px">Для этой папки, ее подпапок и файлов</div></div>
<div class="c" style="left:813px;top:251px;width:120px;height:18px;background:#fff;padding-left:1px"><div style="overflow:hidden;width:116px">пользователи@builtin</div></div>
<div class="c" style="left:933px;top:251px;width:242px;height:18px;background:#fff;padding-left:27px;letter-spacing:0.45px">Неверные флаги наследования</div>
<svg class="a" style="left:937px;top:251px" width="16" height="17" viewBox="0 0 16 17"><path d="M8 2.6 L15 15.3 H1 Z" fill="#fbd891" stroke="#e9924a" stroke-width="1.1" stroke-linejoin="round"/><rect x="7.2" y="6.8" width="1.7" height="4.6" fill="#6a5030"/><rect x="7.2" y="12.4" width="1.7" height="1.3" fill="#6a5030"/></svg>
<div class="c" style="left:1175px;top:251px;width:141px;height:18px;background:#fdf0d6;padding:0"><span class="r g" style="left:0px">F</span><span class="r g" style="left:20px">M</span><span class="r g" style="left:40px">X</span><span class="r g" style="left:60px">W</span><span class="r g" style="left:80px">R</span><span class="r n" style="left:100px">L</span><span class="r n" style="left:120px">S</span></div>
<div class="c" style="left:1316px;top:251px;width:141px;height:18px;background:#fdf0d6;padding:0"><span class="r g" style="left:0px">F</span><span class="r g" style="left:20px">M</span><span class="r g" style="left:40px">X</span><span class="r g" style="left:60px">W</span><span class="r g" style="left:80px">R</span><span class="r n" style="left:100px">L</span><span class="r n" style="left:120px">S</span></div>
<div class="c" style="left:687px;top:269px;width:126px;height:18px;background:#fff;padding-left:2px"><div style="overflow:hidden;width:121px">Для этой папки, ее подпапок и файлов</div></div>
<div class="c" style="left:813px;top:269px;width:120px;height:18px;background:#fff;padding-left:1px"><div style="overflow:hidden;width:116px">пользователи@builtin</div></div>
<div class="c" style="left:933px;top:269px;width:242px;height:18px;background:#fff;padding-left:27px;letter-spacing:0.45px">Наследование без родителя</div>
<svg class="a" style="left:937px;top:269px" width="16" height="17" viewBox="0 0 16 17"><path d="M8 2.6 L15 15.3 H1 Z" fill="#fbd891" stroke="#e9924a" stroke-width="1.1" stroke-linejoin="round"/><rect x="7.2" y="6.8" width="1.7" height="4.6" fill="#6a5030"/><rect x="7.2" y="12.4" width="1.7" height="1.3" fill="#6a5030"/></svg>
<div class="c" style="left:1175px;top:269px;width:141px;height:18px;background:#fdf0d6;padding:0"><span class="r n" style="left:0px">F</span><span class="r g" style="left:20px">M</span><span class="r g" style="left:40px">X</span><span class="r g" style="left:60px">W</span><span class="r g" style="left:80px">R</span><span class="r n" style="left:100px">L</span><span class="r n" style="left:120px">S</span></div>
<div class="c" style="left:1316px;top:269px;width:141px;height:18px;background:#fdf0d6;padding:0"></div>
<div class="c" style="left:687px;top:287px;width:126px;height:18px;background:#fff;padding-left:2px"><div style="overflow:hidden;width:121px">Для этой папки, ее подпапок и файлов</div></div>
<div class="c" style="left:813px;top:287px;width:120px;height:18px;background:#fff;padding-left:1px"><div style="overflow:hidden;width:116px">пользователи@builtin</div></div>
<div class="c" style="left:933px;top:287px;width:242px;height:18px;background:#fff;padding-left:27px;letter-spacing:0.45px">Ложное наследование</div>
<svg class="a" style="left:937px;top:287px" width="16" height="17" viewBox="0 0 16 17"><path d="M8 2.6 L15 15.3 H1 Z" fill="#fbd891" stroke="#e9924a" stroke-width="1.1" stroke-linejoin="round"/><rect x="7.2" y="6.8" width="1.7" height="4.6" fill="#6a5030"/><rect x="7.2" y="12.4" width="1.7" height="1.3" fill="#6a5030"/></svg>
<div class="c" style="left:1175px;top:287px;width:141px;height:18px;background:#fdf0d6;padding:0"></div>
<div class="c" style="left:1316px;top:287px;width:141px;height:18px;background:#fdf0d6;padding:0"><span class="r n" style="left:0px">F</span><span class="r g" style="left:20px">M</span><span class="r n" style="left:40px">X</span><span class="r g" style="left:60px">W</span><span class="r g" style="left:80px">R</span><span class="r n" style="left:100px">L</span><span class="r g" style="left:120px">S</span></div>
<div class="c" style="left:687px;top:305px;width:126px;height:18px;background:#fff;padding-left:2px"><div style="overflow:hidden;width:121px">Для этой папки, ее подпапок и файлов</div></div>
<div class="c" style="left:813px;top:305px;width:120px;height:18px;background:#fff;padding-left:1px"><div style="overflow:hidden;width:116px">все</div></div>
<div class="c" style="left:933px;top:305px;width:242px;height:18px;background:#fff;padding-left:27px;letter-spacing:0.45px">Добавлен пользователь</div>
<svg class="a" style="left:937px;top:305px" width="16" height="17" viewBox="0 0 16 17"><path d="M8 2.6 L15 15.3 H1 Z" fill="#fbd891" stroke="#e9924a" stroke-width="1.1" stroke-linejoin="round"/><rect x="7.2" y="6.8" width="1.7" height="4.6" fill="#6a5030"/><rect x="7.2" y="12.4" width="1.7" height="1.3" fill="#6a5030"/></svg>
<div class="c" style="left:1175px;top:305px;width:141px;height:18px;background:#fdf0d6;padding:0"><span class="r g" style="left:0px">F</span><span class="r g" style="left:20px">M</span><span class="r g" style="left:40px">X</span><span class="r g" style="left:60px">W</span><span class="r g" style="left:80px">R</span><span class="r g" style="left:100px">L</span><span class="r g" style="left:120px">S</span></div>
<div class="c" style="left:1316px;top:305px;width:141px;height:18px;background:#fdf0d6;padding:0"></div>
<div class="c" style="left:687px;top:323px;width:126px;height:18px;background:#fff;padding-left:2px"><div style="overflow:hidden;width:121px">Для этой папки, ее подпапок и файлов</div></div>
<div class="c" style="left:813px;top:323px;width:120px;height:18px;background:#fff;padding-left:1px"><div style="overflow:hidden;width:116px">служба@nt authority</div></div>
<div class="c" style="left:933px;top:323px;width:242px;height:18px;background:#fff;padding-left:25px;letter-spacing:0.15px">Наследуется</div>
<svg class="a" style="left:937px;top:324px" width="16" height="16" viewBox="0 0 16 16"><circle cx="8" cy="8" r="8" fill="#12a04c"/><path d="M3.2 8.2 L6.5 11.2 L12.6 5" fill="none" stroke="#fff" stroke-width="1.3"/></svg>
<div class="c" style="left:1175px;top:323px;width:141px;height:18px;background:#fff;padding:0"><span class="r g" style="left:0px">F</span><span class="r g" style="left:20px">M</span><span class="r g" style="left:40px">X</span><span class="r g" style="left:60px">W</span><span class="r g" style="left:80px">R</span><span class="r n" style="left:100px">L</span><span class="r n" style="left:120px">S</span></div>
<div class="c" style="left:1316px;top:323px;width:141px;height:18px;background:#fff;padding:0"><span class="r g" style="left:0px">F</span><span class="r g" style="left:20px">M</span><span class="r g" style="left:40px">X</span><span class="r g" style="left:60px">W</span><span class="r g" style="left:80px">R</span><span class="r n" style="left:100px">L</span><span class="r n" style="left:120px">S</span></div>
<div class="c" style="left:687px;top:341px;width:126px;height:18px;background:#fff;padding-left:2px"><div style="overflow:hidden;width:121px">Для этой папки, ее подпапок и файлов</div></div>
<div class="c" style="left:813px;top:341px;width:120px;height:18px;background:#fff;padding-left:1px"><div style="overflow:hidden;width:116px">пакетные файлы@nt authority</div></div>
<div class="c" style="left:933px;top:341px;width:242px;height:18px;background:#fff;padding-left:25px;letter-spacing:0.15px">Наследуется</div>
<svg class="a" style="left:937px;top:342px" width="16" height="16" viewBox="0 0 16 16"><circle cx="8" cy="8" r="8" fill="#12a04c"/><path d="M3.2 8.2 L6.5 11.2 L12.6 5" fill="none" stroke="#fff" stroke-width="1.3"/></svg>
<div class="c" style="left:1175px;top:341px;width:141px;height:18px;background:#fff;padding:0"><span class="r g" style="left:0px">F</span><span class="r g" style="left:20px">M</span><span class="r g" style="left:40px">X</span><span class="r g" style="left:60px">W</span><span class="r g" style="left:80px">R</span><span class="r n" style="left:100px">L</span><span class="r n" style="left:120px">S</span></div>
<div class="c" style="left:1316px;top:341px;width:141px;height:18px;background:#fff;padding:0"><span class="r g" style="left:0px">F</span><span class="r g" style="left:20px">M</span><span class="r g" style="left:40px">X</span><span class="r g" style="left:60px">W</span><span class="r g" style="left:80px">R</span><span class="r n" style="left:100px">L</span><span class="r n" style="left:120px">S</span></div>
<div class="c" style="left:687px;top:359px;width:126px;height:18px;background:#fff;padding-left:2px"><div style="overflow:hidden;width:121px">Для этой папки, ее подпапок и файлов</div></div>
<div class="c" style="left:813px;top:359px;width:120px;height:18px;background:#fff;padding-left:1px"><div style="overflow:hidden;width:116px">пользователи@builtin</div></div>
<div class="c" style="left:933px;top:359px;width:242px;height:18px;background:#fff;padding-left:25px;letter-spacing:0.15px">Наследуется</div>
<svg class="a" style="left:937px;top:360px" width="16" height="16" viewBox="0 0 16 16"><circle cx="8" cy="8" r="8" fill="#12a04c"/><path d="M3.2 8.2 L6.5 11.2 L12.6 5" fill="none" stroke="#fff" stroke-width="1.3"/></svg>
<div class="c" style="left:1175px;top:359px;width:141px;height:18px;background:#fff;padding:0"><span class="r g" style="left:0px">F</span><span class="r g" style="left:20px">M</span><span class="r g" style="left:40px">X</span><span class="r g" style="left:60px">W</span><span class="r g" style="left:80px">R</span><span class="r n" style="left:100px">L</span><span class="r n" style="left:120px">S</span></div>
<div class="c" style="left:1316px;top:359px;width:141px;height:18px;background:#fff;padding:0"><span class="r g" style="left:0px">F</span><span class="r g" style="left:20px">M</span><span class="r g" style="left:40px">X</span><span class="r g" style="left:60px">W</span><span class="r g" style="left:80px">R</span><span class="r n" style="left:100px">L</span><span class="r n" style="left:120px">S</span></div>
<div class="c" style="left:687px;top:377px;width:126px;height:18px;background:#fff;padding-left:2px"><div style="overflow:hidden;width:121px">Для этой папки, ее подпапок и файлов</div></div>
<div class="c" style="left:813px;top:377px;width:120px;height:18px;background:#fff;padding-left:1px"><div style="overflow:hidden;width:116px">пользователи@builtin</div></div>
<div class="c" style="left:933px;top:377px;width:242px;height:18px;background:#fff;padding-left:25px;letter-spacing:0.15px">Наследуется</div>
<svg class="a" style="left:937px;top:378px" width="16" height="16" viewBox="0 0 16 16"><circle cx="8" cy="8" r="8" fill="#12a04c"/><path d="M3.2 8.2 L6.5 11.2 L12.6 5" fill="none" stroke="#fff" stroke-width="1.3"/></svg>
<div class="c" style="left:1175px;top:377px;width:141px;height:18px;background:#fff;padding:0"><span class="r g" style="left:0px">F</span><span class="r g" style="left:20px">M</span><span class="r g" style="left:40px">X</span><span class="r g" style="left:60px">W</span><span class="r g" style="left:80px">R</span><span class="r n" style="left:100px">L</span><span class="r n" style="left:120px">S</span></div>
<div class="c" style="left:1316px;top:377px;width:141px;height:18px;background:#fff;padding:0"><span class="r g" style="left:0px">F</span><span class="r g" style="left:20px">M</span><span class="r g" style="left:40px">X</span><span class="r g" style="left:60px">W</span><span class="r g" style="left:80px">R</span><span class="r n" style="left:100px">L</span><span class="r n" style="left:120px">S</span></div>
<div class="c" style="left:687px;top:395px;width:126px;height:18px;background:#fff;padding-left:2px"><div style="overflow:hidden;width:121px">Только для этого файла</div></div>
<div class="c" style="left:813px;top:395px;width:120px;height:18px;background:#fff;padding-left:1px"><div style="overflow:hidden;width:116px">пользователи@builtin</div></div>
<div class="c" style="left:933px;top:395px;width:242px;height:18px;background:#fff;padding-left:25px;letter-spacing:0.15px">Наследуется</div>
<svg class="a" style="left:937px;top:396px" width="16" height="16" viewBox="0 0 16 16"><circle cx="8" cy="8" r="8" fill="#12a04c"/><path d="M3.2 8.2 L6.5 11.2 L12.6 5" fill="none" stroke="#fff" stroke-width="1.3"/></svg>
<div class="c" style="left:1175px;top:395px;width:141px;height:18px;background:#fff;padding:0"><span class="r n" style="left:0px">F</span><span class="r g" style="left:20px">M</span><span class="r n" style="left:40px">X</span><span class="r g" style="left:60px">W</span><span class="r n" style="left:80px">R</span><span class="r g" style="left:100px">L</span><span class="r g" style="left:120px">S</span></div>
<div class="c" style="left:1316px;top:395px;width:141px;height:18px;background:#fff;padding:0"><span class="r n" style="left:0px">F</span><span class="r g" style="left:20px">M</span><span class="r n" style="left:40px">X</span><span class="r g" style="left:60px">W</span><span class="r n" style="left:80px">R</span><span class="r g" style="left:100px">L</span><span class="r g" style="left:120px">S</span></div>
<div class="c" style="left:687px;top:413px;width:126px;height:18px;background:#fff;padding-left:2px"><div style="overflow:hidden;width:121px">Для этой папки, ее подпапок и файлов</div></div>
<div class="c" style="left:813px;top:413px;width:120px;height:18px;background:#fff;padding-left:1px"><div style="overflow:hidden;width:116px">пользователи@builtin</div></div>
<div class="c" style="left:933px;top:413px;width:242px;height:18px;background:#fff;padding-left:25px;letter-spacing:0.15px">Наследуется</div>
<svg class="a" style="left:937px;top:414px" width="16" height="16" viewBox="0 0 16 16"><circle cx="8" cy="8" r="8" fill="#12a04c"/><path d="M3.2 8.2 L6.5 11.2 L12.6 5" fill="none" stroke="#fff" stroke-width="1.3"/></svg>
<div class="c" style="left:1175px;top:413px;width:141px;height:18px;background:#fff;padding:0"><span class="r n" style="left:0px">F</span><span class="r g" style="left:20px">M</span><span class="r n" style="left:40px">X</span><span class="r g" style="left:60px">W</span><span class="r n" style="left:80px">R</span><span class="r g" style="left:100px">L</span><span class="r g" style="left:120px">S</span></div>
<div class="c" style="left:1316px;top:413px;width:141px;height:18px;background:#fff;padding:0"><span class="r n" style="left:0px">F</span><span class="r g" style="left:20px">M</span><span class="r n" style="left:40px">X</span><span class="r g" style="left:60px">W</span><span class="r n" style="left:80px">R</span><span class="r g" style="left:100px">L</span><span class="r g" style="left:120px">S</span></div>
<div class="c" style="left:687px;top:431px;width:126px;height:18px;background:#fff;padding-left:2px"><div style="overflow:hidden;width:121px">Для этой папки, ее подпапок и файлов</div></div>
<div class="c" style="left:813px;top:431px;width:120px;height:18px;background:#fff;padding-left:1px"><div style="overflow:hidden;width:116px">пользователи@builtin</div></div>
<div class="c" style="left:933px;top:431px;width:242px;height:18px;background:#fff;padding-left:25px;letter-spacing:0.15px">Наследуется</div>
<svg class="a" style="left:937px;top:432px" width="16" height="16" viewBox="0 0 16 16"><circle cx="8" cy="8" r="8" fill="#12a04c"/><path d="M3.2 8.2 L6.5 11.2 L12.6 5" fill="none" stroke="#fff" stroke-width="1.3"/></svg>
<div class="c" style="left:1175px;top:431px;width:141px;height:18px;background:#fff;padding:0"><span class="r n" style="left:0px">F</span><span class="r g" style="left:20px">M</span><span class="r n" style="left:40px">X</span><span class="r g" style="left:60px">W</span><span class="r n" style="left:80px">R</span><span class="r g" style="left:100px">L</span><span class="r g" style="left:120px">S</span></div>
<div class="c" style="left:1316px;top:431px;width:141px;height:18px;background:#fff;padding:0"><span class="r n" style="left:0px">F</span><span class="r g" style="left:20px">M</span><span class="r n" style="left:40px">X</span><span class="r g" style="left:60px">W</span><span class="r n" style="left:80px">R</span><span class="r g" style="left:100px">L</span><span class="r g" style="left:120px">S</span></div>
<div class="c" style="left:687px;top:449px;width:126px;height:18px;background:#fff;padding-left:2px"><div style="overflow:hidden;width:121px">Для этой папки, ее подпапок и файлов</div></div>
<div class="c" style="left:813px;top:449px;width:120px;height:18px;background:#fff;padding-left:1px"><div style="overflow:hidden;width:116px">пользователи@builtin</div></div>
<div class="c" style="left:933px;top:449px;width:242px;height:18px;background:#fff;padding-left:27px;letter-spacing:0.45px">Неверные флаги наследования</div>
<svg class="a" style="left:937px;top:449px" width="16" height="17" viewBox="0 0 16 17"><path d="M8 2.6 L15 15.3 H1 Z" fill="#fbd891" stroke="#e9924a" stroke-width="1.1" stroke-linejoin="round"/><rect x="7.2" y="6.8" width="1.7" height="4.6" fill="#6a5030"/><rect x="7.2" y="12.4" width="1.7" height="1.3" fill="#6a5030"/></svg>
<div class="c" style="left:1175px;top:449px;width:141px;height:18px;background:#fdf0d6;padding:0"><span class="r g" style="left:0px">F</span><span class="r g" style="left:20px">M</span><span class="r g" style="left:40px">X</span><span class="r g" style="left:60px">W</span><span class="r g" style="left:80px">R</span><span class="r n" style="left:100px">L</span><span class="r n" style="left:120px">S</span></div>
<div class="c" style="left:1316px;top:449px;width:141px;height:18px;background:#fdf0d6;padding:0"><span class="r g" style="left:0px">F</span><span class="r g" style="left:20px">M</span><span class="r g" style="left:40px">X</span><span class="r g" style="left:60px">W</span><span class="r g" style="left:80px">R</span><span class="r n" style="left:100px">L</span><span class="r n" style="left:120px">S</span></div>
<div class="c" style="left:687px;top:467px;width:126px;height:18px;background:#fff;padding-left:2px"><div style="overflow:hidden;width:121px">Для этой папки, ее подпапок и файлов</div></div>
<div class="c" style="left:813px;top:467px;width:120px;height:18px;background:#fff;padding-left:1px"><div style="overflow:hidden;width:116px">пользователи@builtin</div></div>
<div class="c" style="left:933px;top:467px;width:242px;height:18px;background:#fff;padding-left:27px;letter-spacing:0.45px">Неверные флаги наследования</div>
<svg class="a" style="left:937px;top:467px" width="16" height="17" viewBox="0 0 16 17"><path d="M8 2.6 L15 15.3 H1 Z" fill="#fbd891" stroke="#e9924a" stroke-width="1.1" stroke-linejoin="round"/><rect x="7.2" y="6.8" width="1.7" height="4.6" fill="#6a5030"/><rect x="7.2" y="12.4" width="1.7" height="1.3" fill="#6a5030"/></svg>
<div class="c" style="left:1175px;top:467px;width:141px;height:18px;background:#fdf0d6;padding:0"><span class="r g" style="left:0px">F</span><span class="r g" style="left:20px">M</span><span class="r g" style="left:40px">X</span><span class="r g" style="left:60px">W</span><span class="r g" style="left:80px">R</span><span class="r n" style="left:100px">L</span><span class="r n" style="left:120px">S</span></div>
<div class="c" style="left:1316px;top:467px;width:141px;height:18px;background:#fdf0d6;padding:0"><span class="r g" style="left:0px">F</span><span class="r g" style="left:20px">M</span><span class="r g" style="left:40px">X</span><span class="r g" style="left:60px">W</span><span class="r g" style="left:80px">R</span><span class="r n" style="left:100px">L</span><span class="r n" style="left:120px">S</span></div>
<div class="c" style="left:687px;top:485px;width:126px;height:18px;background:#fff;padding-left:2px"><div style="overflow:hidden;width:121px">Для этой папки, ее подпапок и файлов</div></div>
<div class="c" style="left:813px;top:485px;width:120px;height:18px;background:#fff;padding-left:1px"><div style="overflow:hidden;width:116px">пользователи@builtin</div></div>
<div class="c" style="left:933px;top:485px;width:242px;height:18px;background:#fff;padding-left:26px;letter-spacing:0.45px">Права удалены</div>
<svg class="a" style="left:937px;top:486px" width="16" height="16" viewBox="0 0 16 16"><circle cx="8" cy="8" r="8" fill="#ee2a2c"/><path d="M4.3 4.3 L11.7 11.7 M11.7 4.3 L4.3 11.7" fill="none" stroke="#fff" stroke-width="1.15"/></svg>
<div class="c" style="left:1175px;top:485px;width:141px;height:18px;background:#ebebeb;padding:0"></div>
<div class="c" style="left:1316px;top:485px;width:141px;height:18px;background:#ebebeb;padding:0"><span class="r g" style="left:0px">F</span><span class="r g" style="left:20px">M</span><span class="r g" style="left:40px">X</span><span class="r g" style="left:60px">W</span><span class="r g" style="left:80px">R</span><span class="r n" style="left:100px">L</span><span class="r n" style="left:120px">S</span></div>
<div class="c" style="left:687px;top:503px;width:126px;height:18px;background:#fff;padding-left:2px"><div style="overflow:hidden;width:121px">Для этой папки, ее подпапок и файлов</div></div>
<div class="c" style="left:813px;top:503px;width:120px;height:18px;background:#fff;padding-left:1px"><div style="overflow:hidden;width:116px">пользователи@builtin</div></div>
<div class="c" style="left:933px;top:503px;width:242px;height:18px;background:#fff;padding-left:26px;letter-spacing:0.45px">Права удалены</div>
<svg class="a" style="left:937px;top:504px" width="16" height="16" viewBox="0 0 16 16"><circle cx="8" cy="8" r="8" fill="#ee2a2c"/><path d="M4.3 4.3 L11.7 11.7 M11.7 4.3 L4.3 11.7" fill="none" stroke="#fff" stroke-width="1.15"/></svg>
<div class="c" style="left:1175px;top:503px;width:141px;height:18px;background:#ebebeb;padding:0"></div>
<div class="c" style="left:1316px;top:503px;width:141px;height:18px;background:#ebebeb;padding:0"><span class="r g" style="left:0px">F</span><span class="r g" style="left:20px">M</span><span class="r g" style="left:40px">X</span><span class="r g" style="left:60px">W</span><span class="r g" style="left:80px">R</span><span class="r n" style="left:100px">L</span><span class="r n" style="left:120px">S</span></div>
<div class="c" style="left:687px;top:521px;width:126px;height:18px;background:#fff;padding-left:2px"><div style="overflow:hidden;width:121px">Для этой папки, ее подпапок и файлов</div></div>
<div class="c" style="left:813px;top:521px;width:120px;height:18px;background:#fff;padding-left:1px"><div style="overflow:hidden;width:116px">система@nt authority</div></div>
<div class="c" style="left:933px;top:521px;width:242px;height:18px;background:#fff;padding-left:26px;letter-spacing:0.45px">Права удалены</div>
<svg class="a" style="left:937px;top:522px" width="16" height="16" viewBox="0 0 16 16"><circle cx="8" cy="8" r="8" fill="#ee2a2c"/><path d="M4.3 4.3 L11.7 11.7 M11.7 4.3 L4.3 11.7" fill="none" stroke="#fff" stroke-width="1.15"/></svg>
<div class="c" style="left:1175px;top:521px;width:141px;height:18px;background:#ebebeb;padding:0"></div>
<div class="c" style="left:1316px;top:521px;width:141px;height:18px;background:#ebebeb;padding:0"><span class="r g" style="left:0px">F</span><span class="r g" style="left:20px">M</span><span class="r g" style="left:40px">X</span><span class="r g" style="left:60px">W</span><span class="r g" style="left:80px">R</span><span class="r n" style="left:100px">L</span><span class="r n" style="left:120px">S</span></div>
<div class="c" style="left:687px;top:539px;width:126px;height:18px;background:#fff;padding-left:2px"><div style="overflow:hidden;width:121px">Для этой папки, ее подпапок и файлов</div></div>
<div class="c" style="left:813px;top:539px;width:120px;height:18px;background:#fff;padding-left:1px"><div style="overflow:hidden;width:116px">администраторы@builtin</div></div>
<div class="c" style="left:933px;top:539px;width:242px;height:18px;background:#fff;padding-left:26px;letter-spacing:0.45px">Права удалены</div>
<svg class="a" style="left:937px;top:540px" width="16" height="16" viewBox="0 0 16 16"><circle cx="8" cy="8" r="8" fill="#ee2a2c"/><path d="M4.3 4.3 L11.7 11.7 M11.7 4.3 L4.3 11.7" fill="none" stroke="#fff" stroke-width="1.15"/></svg>
<div class="c" style="left:1175px;top:539px;width:141px;height:18px;background:#ebebeb;padding:0"></div>
<div class="c" style="left:1316px;top:539px;width:141px;height:18px;background:#ebebeb;padding:0"><span class="r g" style="left:0px">F</span><span class="r g" style="left:20px">M</span><span class="r g" style="left:40px">X</span><span class="r g" style="left:60px">W</span><span class="r g" style="left:80px">R</span><span class="r n" style="left:100px">L</span><span class="r n" style="left:120px">S</span></div>
<div class="c" style="left:687px;top:557px;width:126px;height:18px;background:#fff;padding-left:2px"><div style="overflow:hidden;width:121px">Для этой папки, ее подпапок и файлов</div></div>
<div class="c" style="left:813px;top:557px;width:120px;height:18px;background:#fff;padding-left:1px"><div style="overflow:hidden;width:116px">пользователи@builtin</div></div>
<div class="c" style="left:933px;top:557px;width:242px;height:18px;background:#fff;padding-left:25px;letter-spacing:0.15px">Наследуется</div>
<svg class="a" style="left:937px;top:558px" width="16" height="16" viewBox="0 0 16 16"><circle cx="8" cy="8" r="8" fill="#12a04c"/><path d="M3.2 8.2 L6.5 11.2 L12.6 5" fill="none" stroke="#fff" stroke-width="1.3"/></svg>
<div class="c" style="left:1175px;top:557px;width:141px;height:18px;background:#fff;padding:0"><span class="r n" style="left:0px">F</span><span class="r n" style="left:20px">M</span><span class="r d" style="left:40px">X</span><span class="r d" style="left:60px">W</span><span class="r d" style="left:80px">R</span><span class="r n" style="left:100px">L</span><span class="r d" style="left:120px">S</span></div>
<div class="c" style="left:1316px;top:557px;width:141px;height:18px;background:#fff;padding:0"><span class="r n" style="left:0px">F</span><span class="r n" style="left:20px">M</span><span class="r d" style="left:40px">X</span><span class="r d" style="left:60px">W</span><span class="r d" style="left:80px">R</span><span class="r n" style="left:100px">L</span><span class="r d" style="left:120px">S</span></div>
<div class="c" style="left:687px;top:575px;width:126px;height:18px;background:#fff;padding-left:2px"><div style="overflow:hidden;width:121px">Для этой папки, ее подпапок и файлов</div></div>
<div class="c" style="left:813px;top:575px;width:120px;height:18px;background:#fff;padding-left:1px"><div style="overflow:hidden;width:116px">пользователи@builtin</div></div>
<div class="c" style="left:933px;top:575px;width:242px;height:18px;background:#fff;padding-left:25px;letter-spacing:0.15px">Наследуется</div>
<svg class="a" style="left:937px;top:576px" width="16" height="16" viewBox="0 0 16 16"><circle cx="8" cy="8" r="8" fill="#12a04c"/><path d="M3.2 8.2 L6.5 11.2 L12.6 5" fill="none" stroke="#fff" stroke-width="1.3"/></svg>
<div class="c" style="left:1175px;top:575px;width:141px;height:18px;background:#fff;padding:0"><span class="r n" style="left:0px">F</span><span class="r n" style="left:20px">M</span><span class="r d" style="left:40px">X</span><span class="r d" style="left:60px">W</span><span class="r d" style="left:80px">R</span><span class="r n" style="left:100px">L</span><span class="r d" style="left:120px">S</span></div>
<div class="c" style="left:1316px;top:575px;width:141px;height:18px;background:#fff;padding:0"><span class="r n" style="left:0px">F</span><span class="r n" style="left:20px">M</span><span class="r d" style="left:40px">X</span><span class="r d" style="left:60px">W</span><span class="r d" style="left:80px">R</span><span class="r n" style="left:100px">L</span><span class="r d" style="left:120px">S</span></div>
<div class="c" style="left:687px;top:593px;width:126px;height:18px;background:#fff;padding-left:2px"><div style="overflow:hidden;width:121px">Для этой папки, ее подпапок и файлов</div></div>
<div class="c" style="left:813px;top:593px;width:120px;height:18px;background:#fff;padding-left:1px"><div style="overflow:hidden;width:116px">администраторы@builtin</div></div>
<div class="c" style="left:933px;top:593px;width:242px;height:18px;background:#fff;padding-left:25px;letter-spacing:0.15px">Наследуется</div>
<svg class="a" style="left:937px;top:594px" width="16" height="16" viewBox="0 0 16 16"><circle cx="8" cy="8" r="8" fill="#12a04c"/><path d="M3.2 8.2 L6.5 11.2 L12.6 5" fill="none" stroke="#fff" stroke-width="1.3"/></svg>
<div class="c" style="left:1175px;top:593px;width:141px;height:18px;background:#fff;padding:0"><span class="r n" style="left:0px">F</span><span class="r n" style="left:20px">M</span><span class="r d" style="left:40px">X</span><span class="r d" style="left:60px">W</span><span class="r d" style="left:80px">R</span><span class="r n" style="left:100px">L</span><span class="r d" style="left:120px">S</span></div>
<div class="c" style="left:1316px;top:593px;width:141px;height:18px;background:#fff;padding:0"><span class="r n" style="left:0px">F</span><span class="r n" style="left:20px">M</span><span class="r d" style="left:40px">X</span><span class="r d" style="left:60px">W</span><span class="r d" style="left:80px">R</span><span class="r n" style="left:100px">L</span><span class="r d" style="left:120px">S</span></div>
<div class="c" style="left:687px;top:611px;width:126px;height:18px;background:#fff;padding-left:2px"><div style="overflow:hidden;width:121px">Для этой папки, ее подпапок и файлов</div></div>
<div class="c" style="left:813px;top:611px;width:120px;height:18px;background:#fff;padding-left:1px"><div style="overflow:hidden;width:116px">si@sus.local</div></div>
<div class="c" style="left:933px;top:611px;width:242px;height:18px;background:#fff;padding-left:25px;letter-spacing:0.15px">Наследуется</div>
<svg class="a" style="left:937px;top:612px" width="16" height="16" viewBox="0 0 16 16"><circle cx="8" cy="8" r="8" fill="#12a04c"/><path d="M3.2 8.2 L6.5 11.2 L12.6 5" fill="none" stroke="#fff" stroke-width="1.3"/></svg>
<div class="c" style="left:1175px;top:611px;width:141px;height:18px;background:#fff;padding:0"><span class="r d" style="left:0px">F</span><span class="r d" style="left:20px">M</span><span class="r d" style="left:40px">X</span><span class="r d" style="left:60px">W</span><span class="r d" style="left:80px">R</span><span class="r n" style="left:100px">L</span><span class="r n" style="left:120px">S</span></div>
<div class="c" style="left:1316px;top:611px;width:141px;height:18px;background:#fff;padding:0"><span class="r d" style="left:0px">F</span><span class="r d" style="left:20px">M</span><span class="r d" style="left:40px">X</span><span class="r d" style="left:60px">W</span><span class="r d" style="left:80px">R</span><span class="r n" style="left:100px">L</span><span class="r n" style="left:120px">S</span></div>
<div class="c" style="left:687px;top:629px;width:126px;height:18px;background:#fff;padding-left:2px"><div style="overflow:hidden;width:121px">Для этой папки, ее подпапок и файлов</div></div>
<div class="c" style="left:813px;top:629px;width:120px;height:18px;background:#fff;padding-left:1px"><div style="overflow:hidden;width:116px">a.jopa@sus.local</div></div>
<div class="c" style="left:933px;top:629px;width:242px;height:18px;background:#fff;padding-left:27px;letter-spacing:0.45px">Неверные флаги наследования</div>
<svg class="a" style="left:937px;top:629px" width="16" height="17" viewBox="0 0 16 17"><path d="M8 2.6 L15 15.3 H1 Z" fill="#fbd891" stroke="#e9924a" stroke-width="1.1" stroke-linejoin="round"/><rect x="7.2" y="6.8" width="1.7" height="4.6" fill="#6a5030"/><rect x="7.2" y="12.4" width="1.7" height="1.3" fill="#6a5030"/></svg>
<div class="c" style="left:1175px;top:629px;width:141px;height:18px;background:#fdf0d6;padding:0"><span class="r d" style="left:0px">F</span><span class="r d" style="left:20px">M</span><span class="r d" style="left:40px">X</span><span class="r d" style="left:60px">W</span><span class="r d" style="left:80px">R</span><span class="r n" style="left:100px">L</span><span class="r n" style="left:120px">S</span></div>
<div class="c" style="left:1316px;top:629px;width:141px;height:18px;background:#fdf0d6;padding:0"><span class="r d" style="left:0px">F</span><span class="r d" style="left:20px">M</span><span class="r d" style="left:40px">X</span><span class="r d" style="left:60px">W</span><span class="r d" style="left:80px">R</span><span class="r n" style="left:100px">L</span><span class="r n" style="left:120px">S</span></div>
<div class="c" style="left:687px;top:647px;width:126px;height:18px;background:#fff;padding-left:2px"><div style="overflow:hidden;width:121px">Для этой папки, ее подпапок и файлов</div></div>
<div class="c" style="left:813px;top:647px;width:120px;height:18px;background:#fff;padding-left:1px"><div style="overflow:hidden;width:116px">система@nt authority</div></div>
<div class="c" style="left:933px;top:647px;width:242px;height:18px;background:#fff;padding-left:27px;letter-spacing:0.45px">Неверные флаги наследования</div>
<svg class="a" style="left:937px;top:647px" width="16" height="17" viewBox="0 0 16 17"><path d="M8 2.6 L15 15.3 H1 Z" fill="#fbd891" stroke="#e9924a" stroke-width="1.1" stroke-linejoin="round"/><rect x="7.2" y="6.8" width="1.7" height="4.6" fill="#6a5030"/><rect x="7.2" y="12.4" width="1.7" height="1.3" fill="#6a5030"/></svg>
<div class="c" style="left:1175px;top:647px;width:141px;height:18px;background:#fdf0d6;padding:0"><span class="r d" style="left:0px">F</span><span class="r d" style="left:20px">M</span><span class="r d" style="left:40px">X</span><span class="r d" style="left:60px">W</span><span class="r d" style="left:80px">R</span><span class="r n" style="left:100px">L</span><span class="r n" style="left:120px">S</span></div>
<div class="c" style="left:1316px;top:647px;width:141px;height:18px;background:#fdf0d6;padding:0"><span class="r d" style="left:0px">F</span><span class="r d" style="left:20px">M</span><span class="r d" style="left:40px">X</span><span class="r d" style="left:60px">W</span><span class="r d" style="left:80px">R</span><span class="r n" style="left:100px">L</span><span class="r n" style="left:120px">S</span></div>
<div class="c" style="left:687px;top:665px;width:126px;height:18px;background:#fff;padding-left:2px"><div style="overflow:hidden;width:121px">Для этой папки, ее подпапок и файлов</div></div>
<div class="c" style="left:813px;top:665px;width:120px;height:18px;background:#fff;padding-left:1px"><div style="overflow:hidden;width:116px">пользователи@builtin</div></div>
<div class="c" style="left:933px;top:665px;width:242px;height:18px;background:#fff;padding-left:28px;letter-spacing:0.45px">Права удалены</div>
<svg class="a" style="left:937px;top:666px" width="16" height="16" viewBox="0 0 16 16"><circle cx="8" cy="8" r="8" fill="#ee2a2c"/><path d="M4.3 4.3 L11.7 11.7 M11.7 4.3 L4.3 11.7" fill="none" stroke="#fff" stroke-width="1.15"/></svg>
<div class="c" style="left:1175px;top:665px;width:141px;height:18px;background:#ebebeb;padding:0"></div>
<div class="c" style="left:1316px;top:665px;width:141px;height:18px;background:#ebebeb;padding:0"><span class="r n" style="left:0px">F</span><span class="r n" style="left:20px">M</span><span class="r d" style="left:40px">X</span><span class="r n" style="left:60px">W</span><span class="r d" style="left:80px">R</span><span class="r n" style="left:100px">L</span><span class="r d" style="left:120px">S</span></div>
</body></html>
